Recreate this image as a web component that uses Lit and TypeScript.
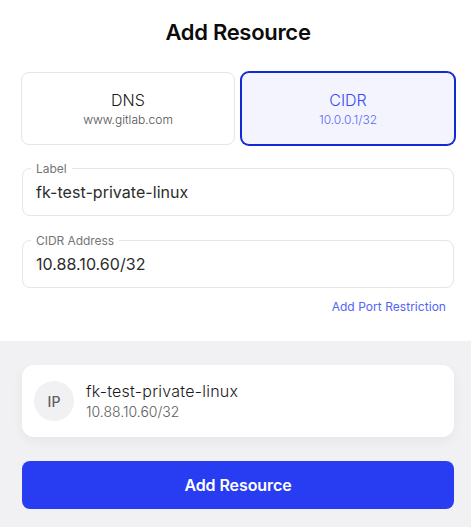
import { LitElement, html, css } from "lit";
import { customElement, property, state } from "lit/decorators.js";
import { classMap } from "lit/directives/class-map.js";

@customElement("outlined-field")
class OutlinedField extends LitElement {
  @property() label = "";
  @property() value = "";

  static styles = css`
    :host { display: block; height: 48px; }
    .field {
      box-sizing: border-box;
      height: 56px;
      margin: -8px 0 0;
      padding: 0 13px 0 8px;
      min-width: 0;
      border: 1px solid #e5e5e8;
      border-radius: 8px;
    }
    .legend {
      height: 17px;
      padding: 0 5px;
      font-size: 12px;
      line-height: 18px;
      letter-spacing: -0.05px;
      color: #757575;
    }
    .value {
      padding: 4px 5px 0;
      font-size: 16px;
      line-height: 22px;
      font-weight: 400;
      letter-spacing: 0.04px;
      color: #2c2c2c;
      white-space: nowrap;
    }
  `;

  render() {
    return html`
      <fieldset class="field">
        <legend class="legend">${this.label}</legend>
        <div class="value">${this.value}</div>
      </fieldset>
    `;
  }
}

@customElement("app-root")
class AppRoot extends LitElement {
  @state() private selected = "CIDR";

  private kinds = [
    { name: "DNS", example: "www.gitlab.com" },
    { name: "CIDR", example: "10.0.0.1/32" },
  ];

  static styles = css`
    :host {
      display: flex;
      flex-direction: column;
      height: 527px;
      overflow: hidden;
      background: #fff;
      font-family: Inter, "Liberation Sans", sans-serif;
    }
    .form {
      box-sizing: border-box;
      height: 341px;
      padding: 18px 17px 0 22px;
    }
    .title {
      margin: 0 0 26px;
      font-size: 22px;
      line-height: 28px;
      font-weight: 600;
      letter-spacing: -0.3px;
      text-align: center;
      color: #0c0c0c;
    }
    .kinds {
      display: grid;
      grid-template-columns: 214px 214px;
      gap: 6px;
      margin: 0 0 23px -1px;
    }
    .kind {
      display: flex;
      flex-direction: column;
      align-items: center;
      box-sizing: border-box;
      height: 73px;
      padding: 16px 0 0;
      border: 1px solid #e5e5e8;
      border-radius: 8px;
      background: #fff;
      font-family: inherit;
      font-weight: 300;
      color: #1a1a1a;
    }
    .kind-name { font-size: 16px; line-height: 22px; }
    .kind-example {
      margin-top: 1px;
      font-size: 12px;
      line-height: 16px;
      color: #505050;
    }
    .kind.active {
      border-color: #1329d3;
      box-shadow: 0 0 0 1px #1329d3;
      background: #f3f4fe;
      color: #3a4cf4;
    }
    .active .kind-example { color: #5968f6; }
    .fields {
      display: flex;
      flex-direction: column;
      gap: 24px;
      width: 432px;
    }
    .link-row {
      display: flex;
      justify-content: flex-end;
      box-sizing: border-box;
      width: 432px;
      padding: 10px 8px 0 0;
    }
    .link {
      font-size: 12px;
      line-height: 18px;
      letter-spacing: 0.04px;
      color: #5464f6;
    }
    .footer {
      flex: 1;
      padding: 24px 17px 0 22px;
      background: #f1f1f3;
    }
    .card {
      display: flex;
      align-items: center;
      gap: 12px;
      box-sizing: border-box;
      width: 432px;
      height: 72px;
      padding: 0 12px;
      border-radius: 12px;
      background: #fff;
      box-shadow: 0 4px 12px rgba(0, 0, 0, 0.05);
    }
    .avatar {
      display: flex;
      align-items: center;
      justify-content: center;
      box-sizing: border-box;
      width: 40px;
      height: 40px;
      padding-top: 2px;
      border-radius: 50%;
      background: #f1f1f3;
      font-size: 14px;
      font-weight: 500;
      line-height: 18px;
      color: #606062;
    }
    .card-name {
      font-size: 16px;
      line-height: 22px;
      font-weight: 300;
      letter-spacing: 0.24px;
      color: #1a1a1a;
    }
    .card-address { font-size: 14px; line-height: 20px; font-weight: 300; color: #5c5c5c; }
    .submit {
      display: block;
      width: 432px;
      height: 48px;
      margin-top: 24px;
      padding: 0;
      border: 0;
      border-radius: 8px;
      background: #283cf2;
      font-family: inherit;
      font-size: 16px;
      font-weight: 600;
      letter-spacing: -0.08px;
      color: #fff;
    }
  `;

  render() {
    return html`
      <section class="form">
        <h1 class="title">Add Resource</h1>
        <div class="kinds">
          ${this.kinds.map(
            (k) => html`
              <button
                class=${classMap({ kind: true, active: k.name === this.selected })}
                @click=${() => (this.selected = k.name)}
              >
                <span class="kind-name">${k.name}</span>
                <span class="kind-example">${k.example}</span>
              </button>
            `
          )}
        </div>
        <div class="fields">
          <outlined-field label="Label" value="fk-test-private-linux"></outlined-field>
          <outlined-field label="CIDR Address" value="10.88.10.60/32"></outlined-field>
        </div>
        <div class="link-row"><span class="link">Add Port Restriction</span></div>
      </section>
      <section class="footer">
        <div class="card">
          <div class="avatar">IP</div>
          <div>
            <div class="card-name">fk-test-private-linux</div>
            <div class="card-address">10.88.10.60/32</div>
          </div>
        </div>
        <button class="submit">Add Resource</button>
      </section>
    `;
  }
}
